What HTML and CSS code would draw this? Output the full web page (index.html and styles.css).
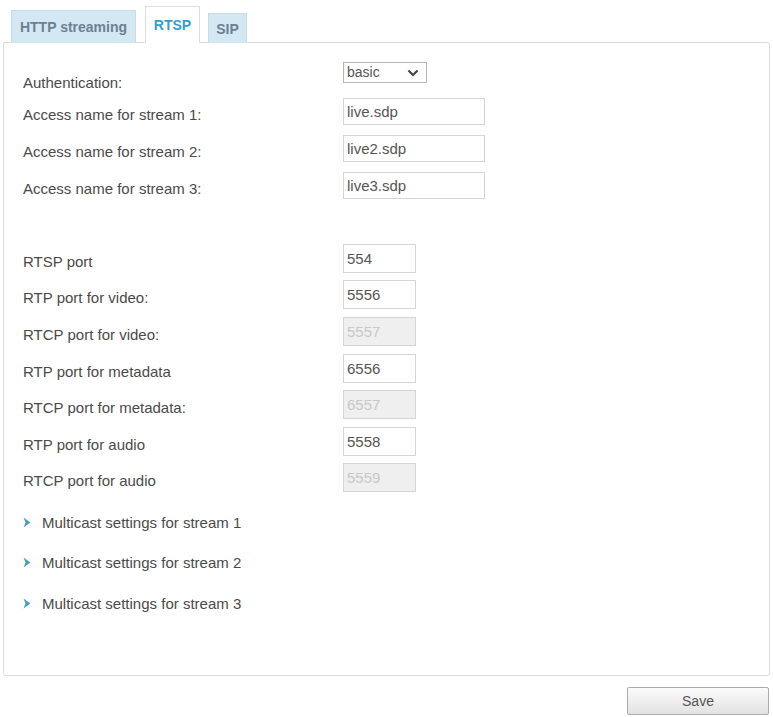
FILE: index.html
```
<!DOCTYPE html>
<html lang="en">
<head>
    <meta charset="UTF-8">
    <title>Streaming - RTSP</title>
    <link rel="stylesheet" href="styles.css">
</head>
<body>
    <div class="tabs">
        <a href="#" class="tab http">HTTP streaming</a>
        <a href="#" class="tab active">RTSP</a>
        <a href="#" class="tab sip">SIP</a>
    </div>

    <div class="panel">
        <form class="settings">
            <label class="auth-label">Authentication:</label>
            <div class="field">
                <div class="select-wrap">
                    <select class="auth-select">
                        <option>basic</option>
                        <option>digest</option>
                        <option>disable</option>
                    </select>
                    <svg class="chevron" width="12" height="8" viewBox="0 0 12 8"><path d="M1.5 1.5 L6 6 L10.5 1.5" fill="none" stroke="#444" stroke-width="2.2"/></svg>
                </div>
            </div>

            <label>Access name for stream 1:</label>
            <div class="field"><input type="text" class="name-input" value="live.sdp"></div>

            <label>Access name for stream 2:</label>
            <div class="field"><input type="text" class="name-input" value="live2.sdp"></div>

            <label>Access name for stream 3:</label>
            <div class="field"><input type="text" class="name-input" value="live3.sdp"></div>

            <div class="spacer"></div>

            <label>RTSP port</label>
            <div class="field"><input type="text" class="port-input" value="554"></div>

            <label>RTP port for video:</label>
            <div class="field"><input type="text" class="port-input" value="5556"></div>

            <label>RTCP port for video:</label>
            <div class="field"><input type="text" class="port-input" value="5557" disabled></div>

            <label>RTP port for metadata</label>
            <div class="field"><input type="text" class="port-input" value="6556"></div>

            <label>RTCP port for metadata:</label>
            <div class="field"><input type="text" class="port-input" value="6557" disabled></div>

            <label>RTP port for audio</label>
            <div class="field"><input type="text" class="port-input" value="5558"></div>

            <label>RTCP port for audio</label>
            <div class="field"><input type="text" class="port-input" value="5559" disabled></div>
        </form>

        <div class="multicast">
            <a href="#" class="expander">
                <svg width="8" height="11" viewBox="0 0 8 11"><path d="M0.5 0.5 L7.5 5.5 L0.5 10.5 L2.5 5.5 Z" fill="#4a9fba"/></svg>
                Multicast settings for stream 1
            </a>
            <a href="#" class="expander">
                <svg width="8" height="11" viewBox="0 0 8 11"><path d="M0.5 0.5 L7.5 5.5 L0.5 10.5 L2.5 5.5 Z" fill="#4a9fba"/></svg>
                Multicast settings for stream 2
            </a>
            <a href="#" class="expander">
                <svg width="8" height="11" viewBox="0 0 8 11"><path d="M0.5 0.5 L7.5 5.5 L0.5 10.5 L2.5 5.5 Z" fill="#4a9fba"/></svg>
                Multicast settings for stream 3
            </a>
        </div>
    </div>

    <div class="actions">
        <button type="button" class="save-button">Save</button>
    </div>
</body>
</html>
```

FILE: styles.css
```
* {
    margin: 0;
    padding: 0;
    box-sizing: border-box;
    font-family: "Liberation Sans", Arial, sans-serif;
}

body {
    background: #fff;
    color: #4a4a4a;
    font-size: 15px;
}

/* tab strip */
.tabs {
    display: flex;
    align-items: flex-end;
    height: 42px;
    padding-left: 11px;
}

.tab {
    display: flex;
    align-items: center;
    justify-content: center;
    height: 33px;
    background: #d3e8f3;
    border: 1px solid #c9dde8;
    border-bottom: none;
    color: #6a8192;
    font-weight: bold;
    font-size: 14px;
    text-decoration: none;
    margin-bottom: -1px;
}

.tab.http {
    width: 125px;
}

.tab.active {
    width: 55px;
    height: 37px;
    margin-left: 9px;
    background: #fff;
    border-color: #ddd;
    color: #2f9fd3;
    position: relative;
    z-index: 1;
}

.tab.sip {
    width: 39px;
    height: 30px;
    margin-left: 8px;
}

/* main panel */
.panel {
    margin: 0 3px;
    height: 634px;
    border: 1px solid #dcdcdc;
    border-radius: 0 3px 3px 3px;
    padding: 14px 0 0 19px;
}

.settings {
    display: grid;
    grid-template-columns: 320px 1fr;
    grid-auto-rows: 36.6px;
    align-items: center;
}

.settings label {
    padding-top: 6px;
}

.settings .auth-label {
    padding-top: 14px;
}

.spacer {
    grid-column: 1 / 3;
}

.field {
    display: flex;
    align-items: center;
}

.select-wrap {
    position: relative;
    margin-top: -6px;
}

.auth-select {
    appearance: none;
    display: block;
    width: 84px;
    height: 21px;
    border: 1px solid #b5b5b5;
    border-radius: 0;
    background: #fff;
    color: #555;
    font-size: 14px;
    padding-left: 3px;
}

.chevron {
    position: absolute;
    right: 8px;
    top: 7px;
    pointer-events: none;
}

input[type="text"] {
    border: 1px solid #d4d4d4;
    background: #fff;
    color: #555;
    font-size: 15px;
    padding: 0 3px;
}

.name-input {
    width: 142px;
    height: 27px;
}

.port-input {
    width: 73px;
    height: 29px;
}

input[type="text"]:disabled {
    background: #efefef;
    color: #c8c8c8;
}

/* collapsed multicast sections */
.multicast {
    display: flex;
    flex-direction: column;
    margin-top: 6px;
}

.expander {
    display: flex;
    align-items: center;
    gap: 11px;
    height: 40.5px;
    color: #4a4a4a;
    text-decoration: none;
}

.actions {
    display: flex;
    justify-content: flex-end;
    padding: 11px 4px 0 0;
}

.save-button {
    width: 142px;
    height: 28px;
    border: 1px solid #ababab;
    border-radius: 2px;
    background: linear-gradient(#fbfbfb, #e2e2e2);
    color: #555;
    font-size: 14px;
    cursor: pointer;
}
```
